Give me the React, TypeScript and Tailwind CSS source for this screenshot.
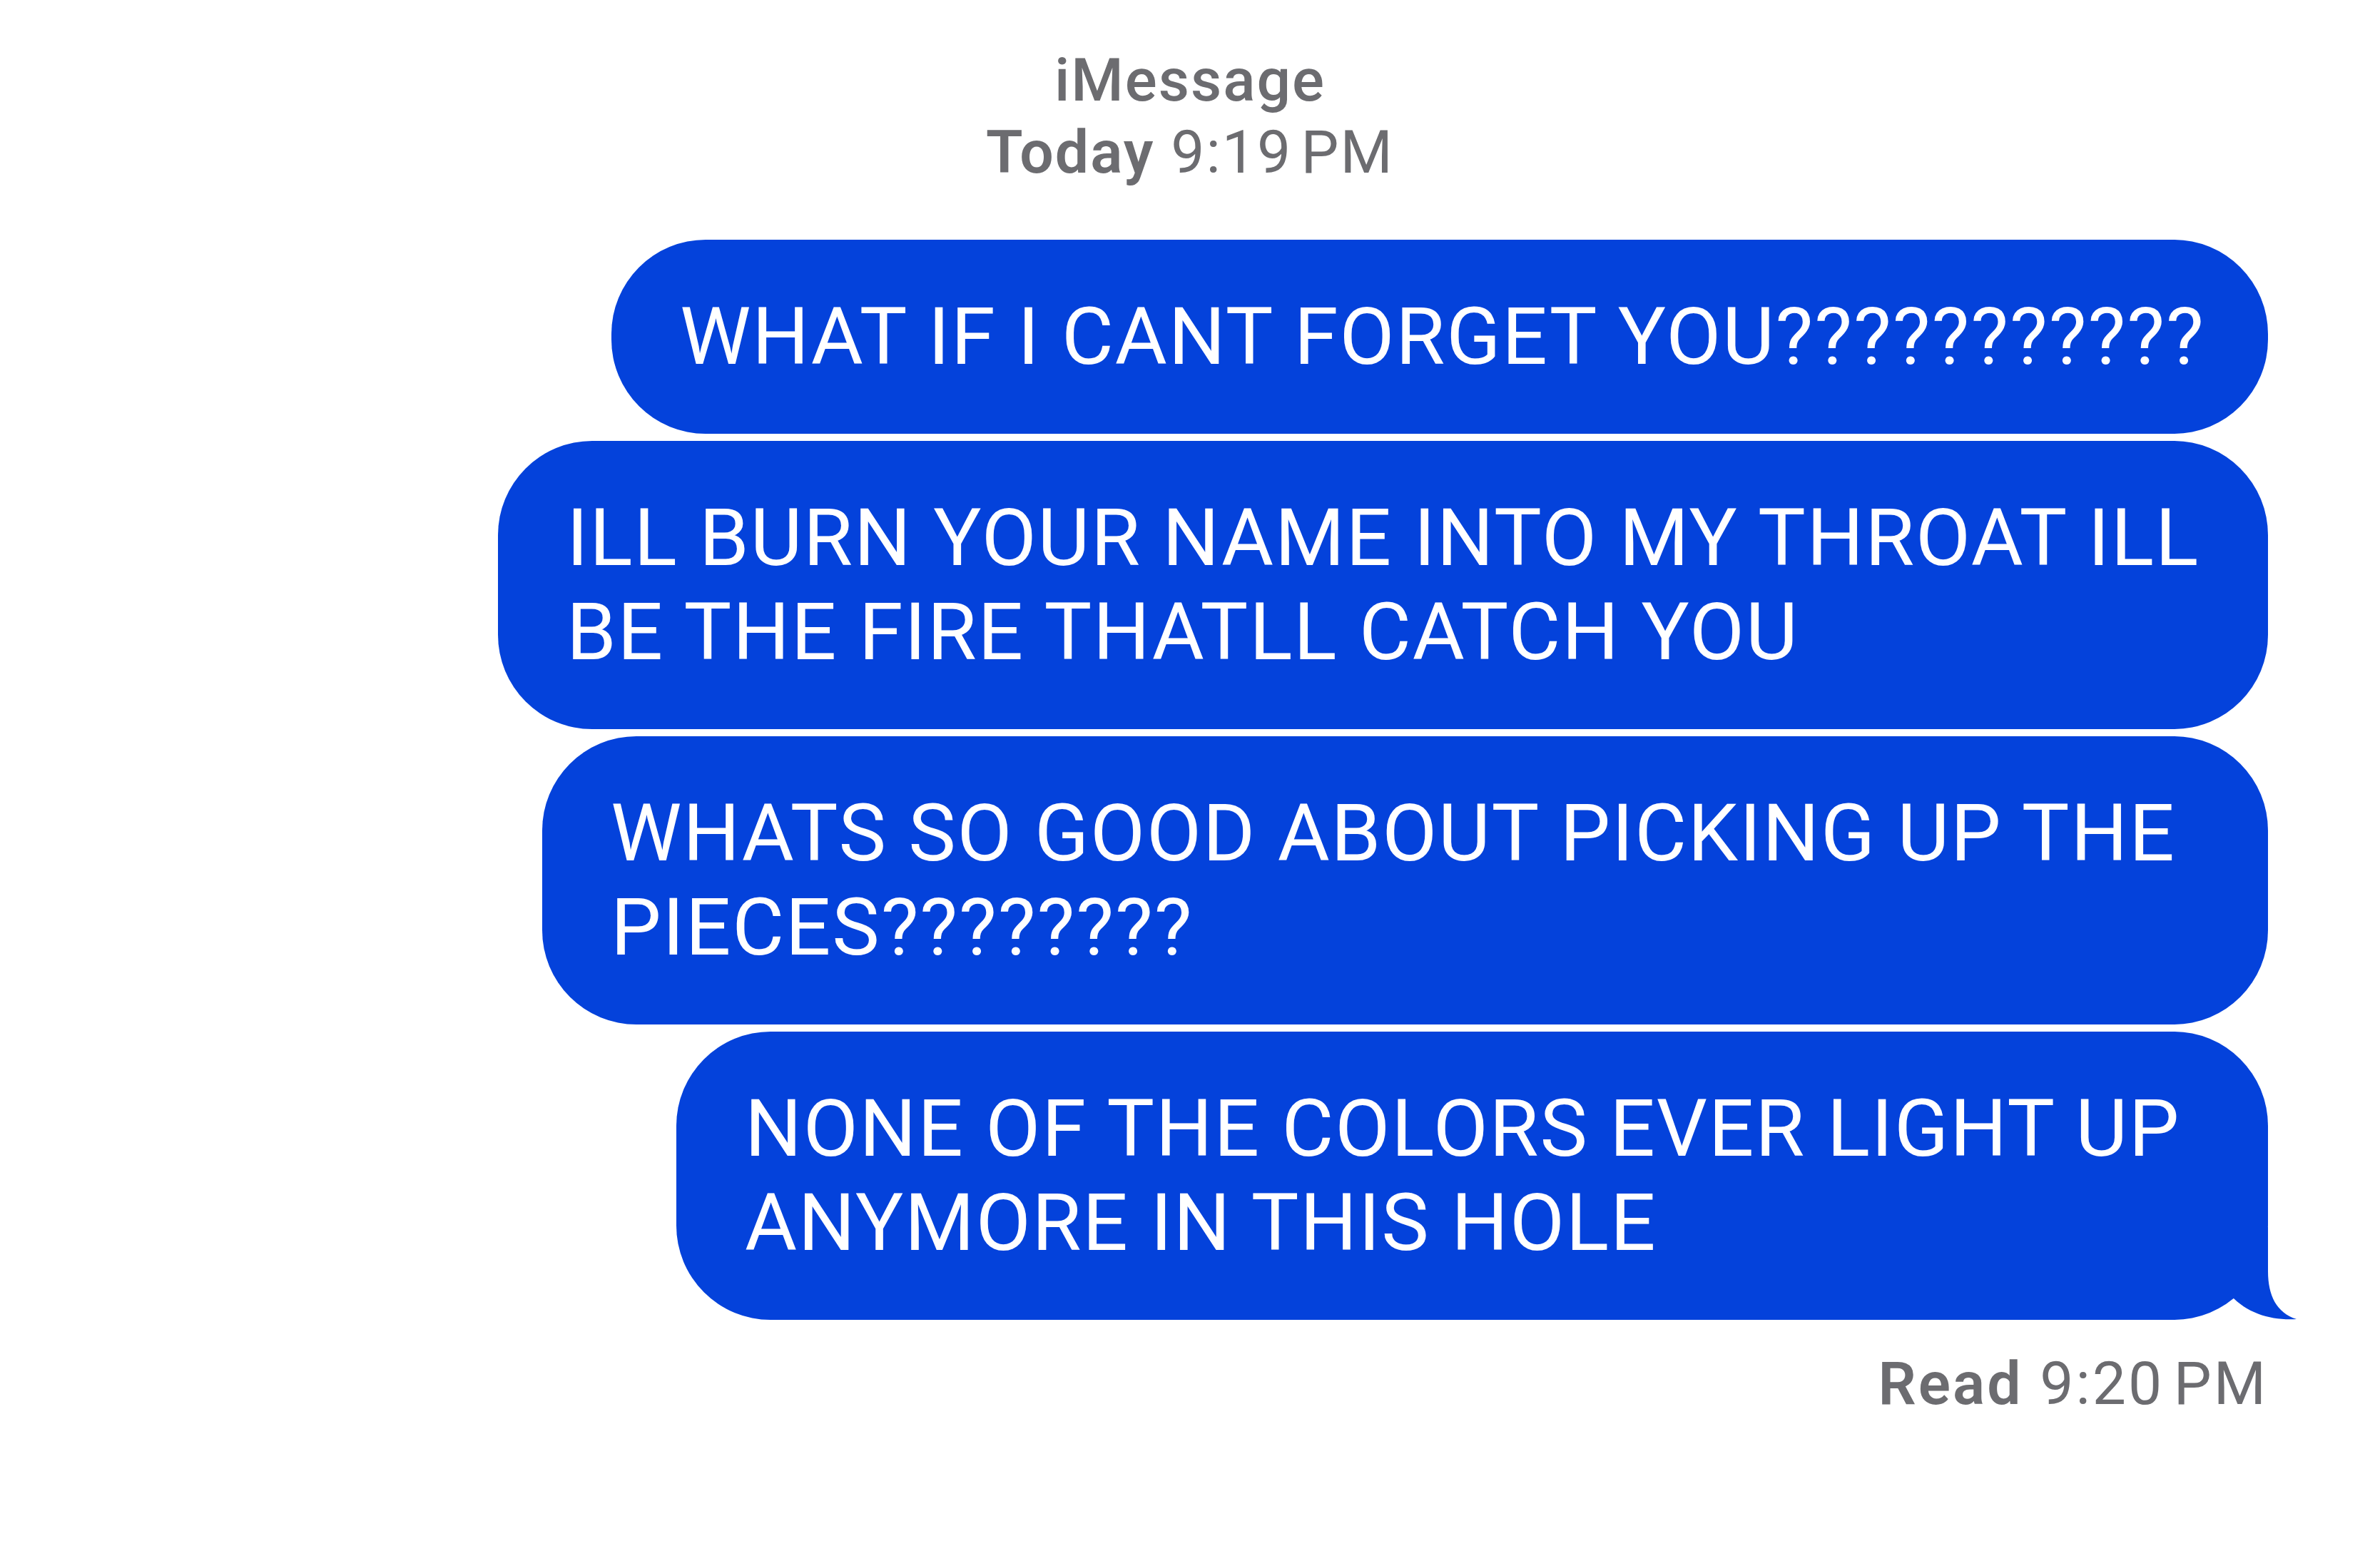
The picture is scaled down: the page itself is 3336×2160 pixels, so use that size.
import React from 'react'

type Msg = {
    id: number
    lines: string[]
    width: string
    tail?: boolean
}

const messages: Msg[] = [
    { id: 1, lines: ['WHAT IF I CANT FORGET YOU???????????'], width: 'w-[2322px]' },
    { id: 2, lines: ['ILL BURN YOUR NAME INTO MY THROAT ILL', 'BE THE FIRE THATLL CATCH YOU'], width: 'w-[2481px]' },
    { id: 3, lines: ['WHATS SO GOOD ABOUT PICKING UP THE', 'PIECES????????'], width: 'w-[2419px]' },
    { id: 4, lines: ['NONE OF THE COLORS EVER LIGHT UP', 'ANYMORE IN THIS HOLE'], width: 'w-[2231px]', tail: true },
]

// little hook under the last bubble
const Tail = () => (
    <svg
        width="100"
        height="130"
        viewBox="0 0 100 130"
        className="absolute -right-[42px] bottom-0"
    >
        <path
            d="M6 0 L58 0 L58 62 C58 96 70 120 98 129 C64 131 30 122 6 96 Z"
            fill="#0442DB"
        />
    </svg>
)

const App = () => {
    return (
        <div className="min-h-screen w-full bg-white font-['Roboto','Liberation_Sans',sans-serif]">

            {/* header */}
            <div className="flex flex-col items-center pt-[62px] text-[84px] leading-[101px] tracking-[2px] text-[#6c6c70]">
                <p className="font-medium">iMessage</p>
                <p>
                    <span className="font-semibold">Today</span> 9:19{'\u202F'}PM
                </p>
            </div>

            {/* bubbles */}
            <div className="mt-[72px] flex flex-col items-end gap-[10px] pr-[157px]">
                {messages.map(m => (
                    <div
                        key={m.id}
                        className={`relative ${m.width} rounded-[132px] bg-[#0442DB] px-[96px] py-[70px] text-[112px] leading-[132px] tracking-[1.8px] text-white whitespace-nowrap`}
                    >
                        {m.lines.map((l, i) => (
                            <span key={i} className="block">{l}</span>
                        ))}
                        {m.tail && <Tail />}
                    </div>
                ))}

                {/* read receipt */}
                <p className="mt-[29px] text-[84px] leading-[101px] tracking-[3px] text-[#6c6c70]">
                    <span className="font-semibold">Read</span> 9:20{'\u202F'}PM
                </p>
            </div>
        </div>
    )
}

export default App
